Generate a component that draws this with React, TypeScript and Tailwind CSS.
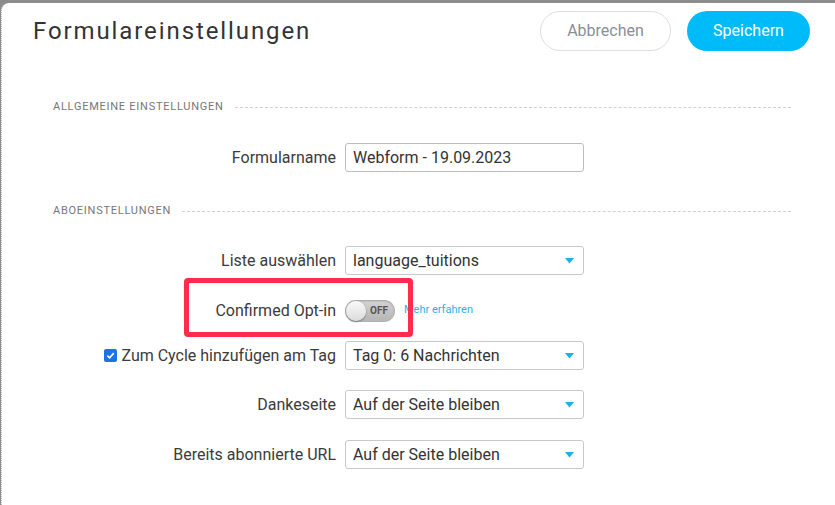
import { ReactNode } from "react";

function SectionTitle({ title }: { title: string }) {
  return (
    <div className="flex items-center gap-[11px] h-[14px]">
      <span className="text-[11px] leading-[14px] tracking-[0.75px] text-[#777] uppercase whitespace-nowrap">
        {title}
      </span>
      <div className="flex-1 border-t border-dashed border-[#d0d0d0]" />
    </div>
  );
}

function Row({
  label,
  children,
  className,
}: {
  label: ReactNode;
  children: ReactNode;
  className?: string;
}) {
  return (
    <div className={"relative flex items-center h-[29px] " + (className ?? "")}>
      <div className="w-[283px] flex justify-end items-center text-[16px] text-[#3b3b3b] whitespace-nowrap">
        {label}
      </div>
      <div className="ml-[9px] flex items-center h-full">{children}</div>
    </div>
  );
}

function Select({ value }: { value: string }) {
  return (
    <div className="w-[239px] h-[29px] border border-[#c8c8c8] rounded-[3px] flex items-center justify-between pl-[7px] pr-[9px] text-[16px] text-[#333] bg-white">
      <span>{value}</span>
      <svg width="9" height="6" viewBox="0 0 9 6">
        <path d="M0 0 L9 0 L4.5 5.5 Z" fill="#1fb0ea" />
      </svg>
    </div>
  );
}

function Toggle() {
  return (
    <div className="relative w-[50px] h-[22px] rounded-full bg-gradient-to-b from-[#d4d4d4] to-[#b4b4b4] shadow-[inset_0_1px_2px_rgba(0,0,0,0.25)]">
      <div className="absolute left-[1px] top-[1px] w-[20px] h-[20px] rounded-full bg-gradient-to-b from-[#fafafa] to-[#dcdcdc] shadow-[0_1px_2px_rgba(0,0,0,0.35)]" />
      <span className="absolute left-[21px] top-0 w-[26px] h-[22px] flex items-center justify-center text-[10px] font-bold text-[#555]">
        OFF
      </span>
    </div>
  );
}

export default function App() {
  return (
    <div
      className="w-[835px] h-[505px] bg-[#8c8c8c] overflow-hidden"
      style={{ fontFamily: "Roboto, 'Liberation Sans', sans-serif" }}
    >
      <div className="mt-[3px] ml-[1px] h-[502px] bg-white rounded-tl-[8px] border-l border-dotted border-[#b8b8b8]">
        <header className="flex items-center justify-between pt-[8px] pl-[31px] pr-[25px] h-[48px]">
          <h1 className="text-[24px] tracking-[1.9px] text-[#333] font-normal">Formulareinstellungen</h1>
          <div className="flex items-center gap-[16px]">
            <button className="w-[131px] h-[40px] rounded-full border border-[#dedede] text-[16px] text-[#8a8f96] bg-white">
              Abbrechen
            </button>
            <button className="w-[123px] h-[40px] rounded-full bg-[#00bbf9] text-[16px] text-white">
              Speichern
            </button>
          </div>
        </header>

        <main className="pl-[51px] pr-[44px]">
          <div className="mt-[49px]">
            <SectionTitle title="Allgemeine Einstellungen" />
          </div>

          <Row label="Formularname" className="mt-[29px]">
            <div className="w-[239px] h-[29px] border border-[#bdbdbd] rounded-[3px] flex items-center pl-[7px] text-[16px] text-[#333]">
              Webform - 19.09.2023
            </div>
          </Row>

          <div className="mt-[32px]">
            <SectionTitle title="Aboeinstellungen" />
          </div>

          <Row label="Liste auswählen" className="mt-[28px]">
            <Select value="language_tuitions" />
          </Row>

          <Row label="Confirmed Opt-in" className="mt-[21px]">
            <div className="flex items-center">
              <Toggle />
              <a className="ml-[9px] text-[11px] text-[#27b3ee]">Mehr erfahren</a>
            </div>
            <div className="absolute left-[131px] top-[-18px] w-[229px] h-[59px] border-[5px] border-[#ff2d4b] rounded-[4px] pointer-events-none" />
          </Row>

          <Row
            label={
              <span className="flex items-center gap-[4px]">
                <span className="w-[13px] h-[13px] rounded-[2px] bg-[#1b73e8] flex items-center justify-center">
                  <svg width="9" height="9" viewBox="0 0 10 10">
                    <path d="M1.5 5.2 L4 7.6 L8.6 2.4" stroke="white" strokeWidth="1.8" fill="none" />
                  </svg>
                </span>
                Zum Cycle hinzufügen am Tag
              </span>
            }
            className="mt-[16px]"
          >
            <Select value="Tag 0: 6 Nachrichten" />
          </Row>

          <Row label="Dankeseite" className="mt-[20px]">
            <Select value="Auf der Seite bleiben" />
          </Row>

          <Row label="Bereits abonnierte URL" className="mt-[21px]">
            <Select value="Auf der Seite bleiben" />
          </Row>
        </main>
      </div>
    </div>
  );
}
